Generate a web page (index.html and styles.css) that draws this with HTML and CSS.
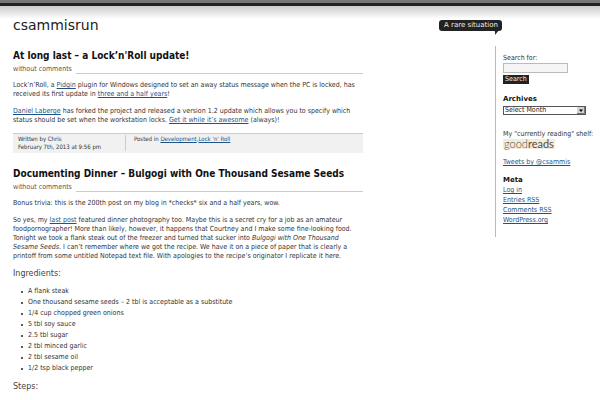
FILE: index.html
```
<!DOCTYPE html>
<html lang="en">
<head>
  <meta charset="UTF-8">
  <title>csammisrun</title>
  <meta name="viewport" content="width=device-width, initial-scale=1.0">
  <link rel="stylesheet" href="styles.css">
</head>
<body>
  <header class="site-header">
    <h1>csammisrun</h1>
    <p class="tagline">A rare situation
      <svg class="tail" width="5" height="5" viewBox="0 0 5 5"><path d="M0 0H5L1 5Q2 2 0 0Z" fill="#222"/></svg>
    </p>
  </header>

  <div class="columns">
    <main class="content">
      <article class="post">
        <h2>At long last – a Lock’n'Roll update!</h2>
        <div class="comments"><span>without comments</span></div>
        <p>Lock’n’Roll, a <a href="#">Pidgin</a> plugin for Windows designed to set an away status message when the PC is locked, has received its first update in <a href="#">three and a half years</a>!</p>
        <p><a href="#">Daniel Laberge</a> has forked the project and released a version 1.2 update which allows you to specify which status should be set when the workstation locks. <a href="#">Get it while it’s awesome</a> (always)!</p>
        <footer class="post-meta">
          <div class="written">Written by Chris<br>February 7th, 2013 at 9:56 pm</div>
          <div class="posted">Posted in <a href="#">Development</a>,<a href="#">Lock 'n' Roll</a></div>
        </footer>
      </article>

      <article class="post">
        <h2>Documenting Dinner – Bulgogi with One Thousand Sesame Seeds</h2>
        <div class="comments"><span>without comments</span></div>
        <p>Bonus trivia: this is the 200th post on my blog in *checks* six and a half years, wow.</p>
        <p>So yes, my <a href="#">last post</a> featured dinner photography too. Maybe this is a secret cry for a job as an amateur foodpornographer! More than likely, however, it happens that Courtney and I make some fine-looking food. Tonight we took a flank steak out of the freezer and turned that sucker into <em>Bulgogi with One Thousand Sesame Seeds</em>. I can’t remember where we got the recipe. We have it on a piece of paper that is clearly a printoff from some untitled Notepad text file. With apologies to the recipe’s originator I replicate it here.</p>
        <h3>Ingredients:</h3>
        <ul>
          <li>A flank steak</li>
          <li>One thousand sesame seeds – 2 tbl is acceptable as a substitute</li>
          <li>1/4 cup chopped green onions</li>
          <li>5 tbl soy sauce</li>
          <li>2.5 tbl sugar</li>
          <li>2 tbl minced garlic</li>
          <li>2 tbl sesame oil</li>
          <li>1/2 tsp black pepper</li>
        </ul>
        <h3>Steps:</h3>
      </article>
    </main>

    <aside class="sidebar">
      <form class="search">
        <label for="s">Search for:</label>
        <input type="text" id="s">
        <button type="submit">Search</button>
      </form>
      <section class="archives">
        <h4><label for="archive">Archives</label></h4>
        <div class="select-wrap">
          <select id="archive">
            <option>Select Month</option>
          </select>
          <svg class="arrow" width="8" height="7" viewBox="0 0 8 7"><path d="M0 0H8V7H0Z" fill="#d6d3ca"/><path d="M0 6.5H7.5V0" fill="none" stroke="#777"/><path d="M2 2.5H6L4 5Z" fill="#000"/></svg>
        </div>
      </section>
      <section class="shelf">
        <div>My "currently reading" shelf:</div>
        <a href="#" class="goodreads">good<b>reads</b></a>
      </section>
      <p class="tweets"><a href="#">Tweets by @csammis</a></p>
      <section>
        <h4>Meta</h4>
        <nav>
          <a href="#">Log in</a>
          <a href="#">Entries RSS</a>
          <a href="#">Comments RSS</a>
          <a href="#">WordPress.org</a>
        </nav>
      </section>
    </aside>
  </div>
</body>
</html>
```
FILE: styles.css
```
* {
  box-sizing: border-box;
}

body {
  margin: 0;
  border-top: 3px solid #777;
  background: #fff;
  color: #333;
  font-family: "DejaVu Sans Condensed", "DejaVu Sans", sans-serif;
  font-size: 7px;
  line-height: 9px;
}

h1, h2, h3, h4, p, ul {
  margin: 0;
  font-weight: normal;
}

a {
  color: #1c5489;
}

.site-header {
  display: flex;
  justify-content: space-between;
  align-items: flex-start;
  height: 43px;
  padding: 14px 98px 0 13px;
  border-top: 3px solid #222;
  background: linear-gradient(#ccc, #fff 13px);
}

h1 {
  color: #222;
  font-family: "DejaVu Sans", sans-serif;
  font-size: 14px;
  line-height: 10px;
}

.tagline {
  position: relative;
  padding: 0 4px 0 5px;
  border-radius: 3px;
  background: #222;
  color: #eee;
  font-family: "DejaVu Sans", sans-serif;
  line-height: 11px;
}

.tail {
  position: absolute;
  right: 3px;
  top: 10px;
}

.columns {
  display: flex;
  justify-content: space-between;
  align-items: flex-start;
}

.content {
  width: 363px;
  padding: 3px 0 0 13px;
}

.post {
  margin-bottom: 14px;
}

h2 {
  color: #111;
  font-size: 10px;
  font-weight: bold;
  line-height: 14px;
}

.comments {
  display: flex;
  align-items: center;
  gap: 4px;
  margin: 2px 0 7px;
  color: #555;
}

.comments::after {
  content: "";
  flex: 1;
  height: 1px;
  margin-top: 8px;
  background: #ccc;
}

.post p {
  margin-bottom: 8px;
}

.post-meta {
  display: flex;
  padding: 1px 5px 2px;
  border-top: 1px solid #ccc;
  background: #f1f1f1;
  font-size: 6px;
  line-height: 8px;
}

.written {
  width: 108px;
  border-right: 1px solid #ccc;
}

.posted {
  padding-left: 8px;
}

h3 {
  margin-bottom: 7px;
  color: #444;
  font-family: "DejaVu Sans", sans-serif;
  font-size: 8px;
  line-height: 10px;
}

ul {
  margin-bottom: 8px;
  padding-left: 8px;
  line-height: 11px;
  list-style: none;
}

li {
  display: flex;
  align-items: center;
  gap: 5px;
}

li::before {
  content: "";
  width: 2px;
  height: 2px;
  border-radius: 1px;
  background: #222;
}

.sidebar {
  width: 105px;
  padding: 8px 0 12px 7px;
  border-left: 1px solid #bbb;
}

.search {
  display: flex;
  flex-direction: column;
  align-items: flex-start;
}

.search input {
  width: 65px;
  height: 10px;
  margin-bottom: 2px;
  padding: 0 2px;
  border: 1px solid #bbb;
  background: #f5f5f5;
  font: inherit;
}

.search button {
  height: 9px;
  padding: 0 2px;
  border: 0;
  background: #222;
  color: #eee;
  font: inherit;
}

h4 {
  color: #111;
  font-family: "DejaVu Sans", sans-serif;
  font-weight: bold;
  line-height: 10px;
}

.archives {
  margin: 10px 0 15px;
}

.select-wrap {
  position: relative;
  width: 83px;
  margin-top: 2px;
}

select {
  display: block;
  width: 100%;
  height: 9px;
  padding: 0 1px;
  border: 1px solid #555;
  border-radius: 0;
  background: #fff;
  color: #222;
  font: inherit;
  line-height: 7px;
  appearance: none;
}

.arrow {
  position: absolute;
  right: 1px;
  top: 1px;
  pointer-events: none;
}

.shelf {
  white-space: nowrap;
}

.goodreads {
  display: inline-block;
  padding: 0 1px;
  background: #f0ece0;
  color: #5b4a38;
  font-family: Lato, sans-serif;
  font-size: 11px;
  font-weight: 300;
  line-height: 10px;
  text-decoration: none;
}

.tweets {
  margin: 7px 0 8px;
}

nav {
  display: flex;
  flex-direction: column;
  align-items: flex-start;
  line-height: 10px;
}
```
